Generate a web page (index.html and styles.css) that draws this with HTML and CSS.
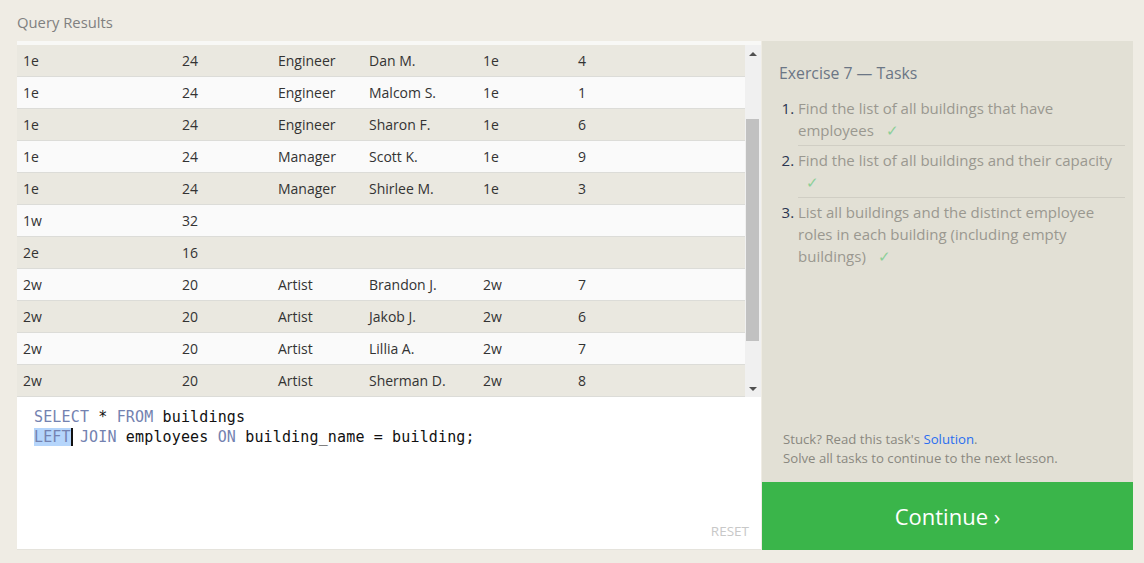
FILE: index.html
```html
<!DOCTYPE html>
<html>
<head>
<meta charset="utf-8">
<link rel="stylesheet" href="styles.css">
</head>
<body>
<div class="page">
  <div class="heading">Query Results</div>
  <div class="main">
    <div class="left">
      <div class="results">
        <div class="table-wrap">
          <table class="tbl">
            <colgroup><col style="width:159px"><col style="width:96px"><col style="width:91px"><col style="width:114px"><col style="width:95px"><col></colgroup>
            <tbody>
              <tr><td>1e</td><td>24</td><td>Engineer</td><td>Dan M.</td><td>1e</td><td>4</td></tr>
              <tr><td>1e</td><td>24</td><td>Engineer</td><td>Malcom S.</td><td>1e</td><td>1</td></tr>
              <tr><td>1e</td><td>24</td><td>Engineer</td><td>Sharon F.</td><td>1e</td><td>6</td></tr>
              <tr><td>1e</td><td>24</td><td>Manager</td><td>Scott K.</td><td>1e</td><td>9</td></tr>
              <tr><td>1e</td><td>24</td><td>Manager</td><td>Shirlee M.</td><td>1e</td><td>3</td></tr>
              <tr><td>1w</td><td>32</td><td></td><td></td><td></td><td></td></tr>
              <tr><td>2e</td><td>16</td><td></td><td></td><td></td><td></td></tr>
              <tr><td>2w</td><td>20</td><td>Artist</td><td>Brandon J.</td><td>2w</td><td>7</td></tr>
              <tr><td>2w</td><td>20</td><td>Artist</td><td>Jakob J.</td><td>2w</td><td>6</td></tr>
              <tr><td>2w</td><td>20</td><td>Artist</td><td>Lillia A.</td><td>2w</td><td>7</td></tr>
              <tr><td>2w</td><td>20</td><td>Artist</td><td>Sherman D.</td><td>2w</td><td>8</td></tr>
            </tbody>
          </table>
        </div>
        <div class="scrollbar">
          <div class="arrow up"></div>
          <div class="track"><div class="thumb"></div></div>
          <div class="arrow down"></div>
        </div>
      </div>
      <div class="editor">
        <div class="code"><span class="kw">SELECT</span> * <span class="kw">FROM</span> buildings</div>
        <div class="code"><span class="kw sel">LEFT</span><span class="cursor"></span> <span class="kw">JOIN</span> employees <span class="kw">ON</span> building_name = building;</div>
        <div class="reset">RESET</div>
      </div>
    </div>
    <div class="right">
      <div class="tasks">
        <div class="title">Exercise 7 — Tasks</div>
        <ol class="list">
          <li>Find the list of all buildings that have employees <span class="check">✓</span></li>
          <li>Find the list of all buildings and their capacity <span class="check">✓</span></li>
          <li>List all buildings and the distinct employee roles in each building (including empty buildings) <span class="check">✓</span></li>
        </ol>
        <div class="foot">
          <div>Stuck? Read this task's <span class="link">Solution</span>.</div>
          <div>Solve all tasks to continue to the next lesson.</div>
        </div>
      </div>
      <div class="continue">Continue ›</div>
    </div>
  </div>
</div>
</body>
</html>
```
FILE: styles.css
```css
html, body {
  margin: 0;
  padding: 0;
  background: #efece4;
  font-family: "Open Sans", "Noto Sans", sans-serif;
}
.page {
  padding: 0 11px 0 17px;
  height: 563px;
  box-sizing: border-box;
}
.heading {
  font-size: 14.8px;
  color: #808080;
  height: 41px;
  line-height: 45px;
}
.main {
  display: flex;
  height: 509px;
}
.left {
  width: 744px;
  display: flex;
  flex-direction: column;
  background: #fff;
}
.results {
  display: flex;
  height: 356px;
  border-top: 4px solid #f8f8f6;
  box-sizing: border-box;
  background: #fafafa;
}
.table-wrap {
  flex: 1;
  overflow: hidden;
}
.tbl {
  width: 100%;
  border-collapse: collapse;
  table-layout: fixed;
  font-size: 14px;
  color: #333;
}
.tbl td {
  height: 31px;
  padding: 0 0 0 6px;
  border-bottom: 1px solid #dcdcd8;
  white-space: nowrap;
}
.tbl tr:nth-child(odd) td { background: #eae8e0; }
.tbl tr:nth-child(even) td { background: #fafafa; }
.scrollbar {
  width: 16px;
  background: #f0f0f0;
  display: flex;
  flex-direction: column;
}
.arrow {
  height: 17px;
  display: flex;
  align-items: center;
  justify-content: center;
}
.arrow.up::before {
  content: "";
  border-left: 4px solid transparent;
  border-right: 4px solid transparent;
  border-bottom: 4px solid #505050;
}
.arrow.down::before {
  content: "";
  border-left: 4px solid transparent;
  border-right: 4px solid transparent;
  border-top: 4px solid #505050;
}
.track {
  flex: 1;
  padding: 57px 2px 0 1px;
}
.thumb {
  height: 222px;
  background: #c1c1c1;
}
.editor {
  flex: 1;
  padding: 10px 0 0 17px;
  position: relative;
  background: #fff;
  border-bottom: 1px solid #e5e3dc;
}
.code {
  font-family: "DejaVu Sans Mono", monospace;
  font-size: 15px;
  letter-spacing: 0.15px;
  line-height: 20px;
  color: #111;
  white-space: pre;
}
.kw { color: #7482b0; }
.sel { background: #b5d5fb; }
.cursor {
  display: inline-block;
  width: 2px;
  height: 18px;
  background: #111;
  vertical-align: -4px;
  margin-right: -2px;
}
.reset {
  position: absolute;
  right: 12px;
  bottom: 9px;
  font-size: 13.5px;
  color: #c8c8c8;
}
.right {
  flex: 1;
  display: flex;
  flex-direction: column;
  margin-left: 1px;
}
.tasks {
  flex: 1;
  background: #e2e0d5;
  padding: 21px 8px 0 17px;
  display: flex;
  flex-direction: column;
}
.title {
  font-size: 15.8px;
  color: #6b7685;
  line-height: 22px;
}
.list {
  margin: 10px 0 0 0;
  padding: 0 0 0 19px;
  font-size: 15px;
  line-height: 22px;
  color: #9a9890;
}
.list li {
  padding: 3px 0 4px 0;
  border-bottom: 1px solid #d0cec4;
}
.list li:last-child { border-bottom: none; }
.list li::marker { color: #2a3550; }
.check {
  color: #8ccf98;
  margin-left: 8px;
}
.foot {
  margin-top: auto;
  padding-bottom: 14px;
  font-size: 13.2px;
  line-height: 19px;
  color: #8a8880;
  padding-left: 4px;
}
.link { color: #2a6ef0; }
.continue {
  height: 68px;
  background: #3ab54a;
  color: #fff;
  font-size: 22px;
  display: flex;
  align-items: center;
  justify-content: center;
}
```
